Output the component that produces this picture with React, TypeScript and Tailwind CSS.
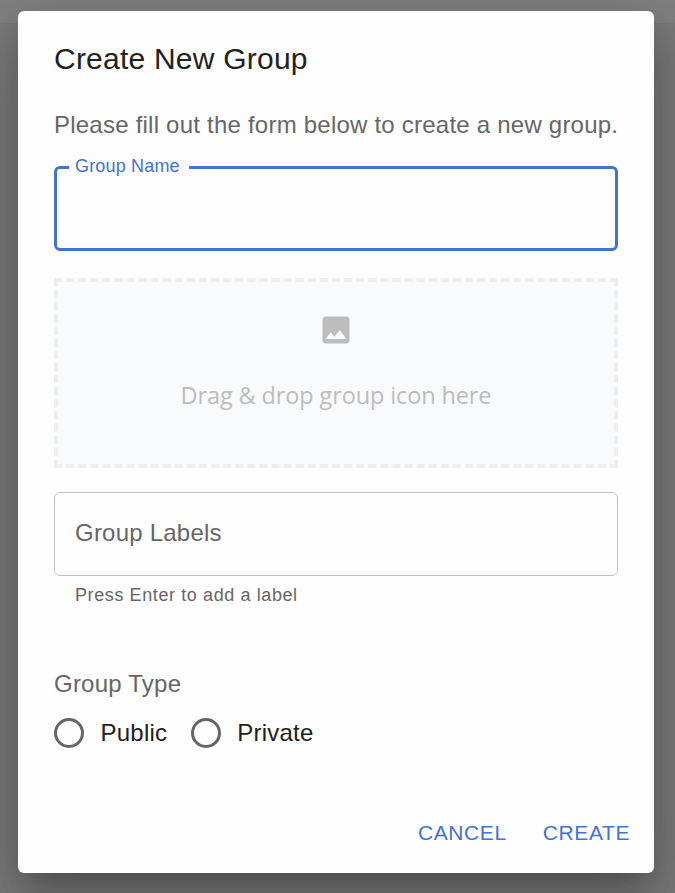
import React from "react";

function RadioOption({ label }: { label: string }) {
  return (
    <label className="flex h-[61px] items-center">
      <input type="radio" name="group-type" className="sr-only" />
      <span className="size-[30px] rounded-full border-3 border-[#666]" />
      <span className="ml-[16.5px] leading-9 text-[#212121]">{label}</span>
    </label>
  );
}

export default function App() {
  return (
    <div className="h-[893px] w-[675px] overflow-hidden bg-linear-to-b from-[#808080] from-[23px] to-[#7a7a7b] to-[23px] pt-[11px] pl-[18px] font-['Liberation_Sans',Arial,sans-serif] text-2xl tracking-[0.225px] text-[#666]">
      <div
        role="dialog"
        className="flex h-[862px] w-[636px] flex-col rounded-md bg-[#fefefe] shadow-[0_16.5px_22.5px_-10.5px_rgba(0,0,0,0.2),0_36px_57px_4.5px_rgba(0,0,0,0.14),0_13.5px_69px_12px_rgba(0,0,0,0.12)]"
      >
        <h2 className="px-9 py-6 text-[30px] leading-[48px] text-[#212121]">Create New Group</h2>
        <div className="flex flex-col px-9">
          <p className="leading-9 whitespace-nowrap">Please fill out the form below to create a new group.</p>

          <div className="relative mt-[23px] h-[85px] rounded-md border-3 border-[#4273d3]">
            <label className="absolute -top-4 left-3 bg-[#fefefe] pr-[9px] pl-1.5 text-lg leading-[26px] tracking-[0.17px] text-[#4273d3]">
              Group Name
            </label>
          </div>

          <div className="mt-[27px] flex h-[190px] flex-col items-center border-4 border-dashed border-[#eee] bg-[#f9fafc] pt-[30px] text-[#bdbdbd]">
            <svg viewBox="0 0 24 24" className="size-9" fill="currentColor">
              <path d="M21 19V5c0-1.1-.9-2-2-2H5c-1.1 0-2 .9-2 2v14c0 1.1.9 2 2 2h14c1.1 0 2-.9 2-2zM8.5 13.500l2.500 3.010L14.500 12l4.500 6H5l3.500-4.500z" />
            </svg>
            <p className="mt-[29px] font-['Open_Sans','Noto_Sans',sans-serif] text-[23.5px] leading-9 tracking-[-0.12px]">
              Drag &amp; drop group icon here
            </p>
          </div>

          <div className="mt-6 flex h-[84px] items-center rounded-md border border-[#c0c2c1] px-5">
            <span className="pb-0.5 leading-9">Group Labels</span>
          </div>
          <p className="mt-1 px-[21px] text-lg leading-[30px] tracking-[0.6px]">Press Enter to add a label</p>

          <div className="mt-14 leading-9">Group Type</div>
          <div className="flex gap-[23.5px]">
            <RadioOption label="Public" />
            <RadioOption label="Private" />
          </div>
        </div>
        <div className="mt-auto flex justify-end gap-3 px-3 pt-3 pb-[13px] text-[21px] leading-9 tracking-[0.6px] text-[#4273d3]">
          <button className="px-3 py-[9px]">CANCEL</button>
          <button className="px-3 py-[9px]">CREATE</button>
        </div>
      </div>
    </div>
  );
}
